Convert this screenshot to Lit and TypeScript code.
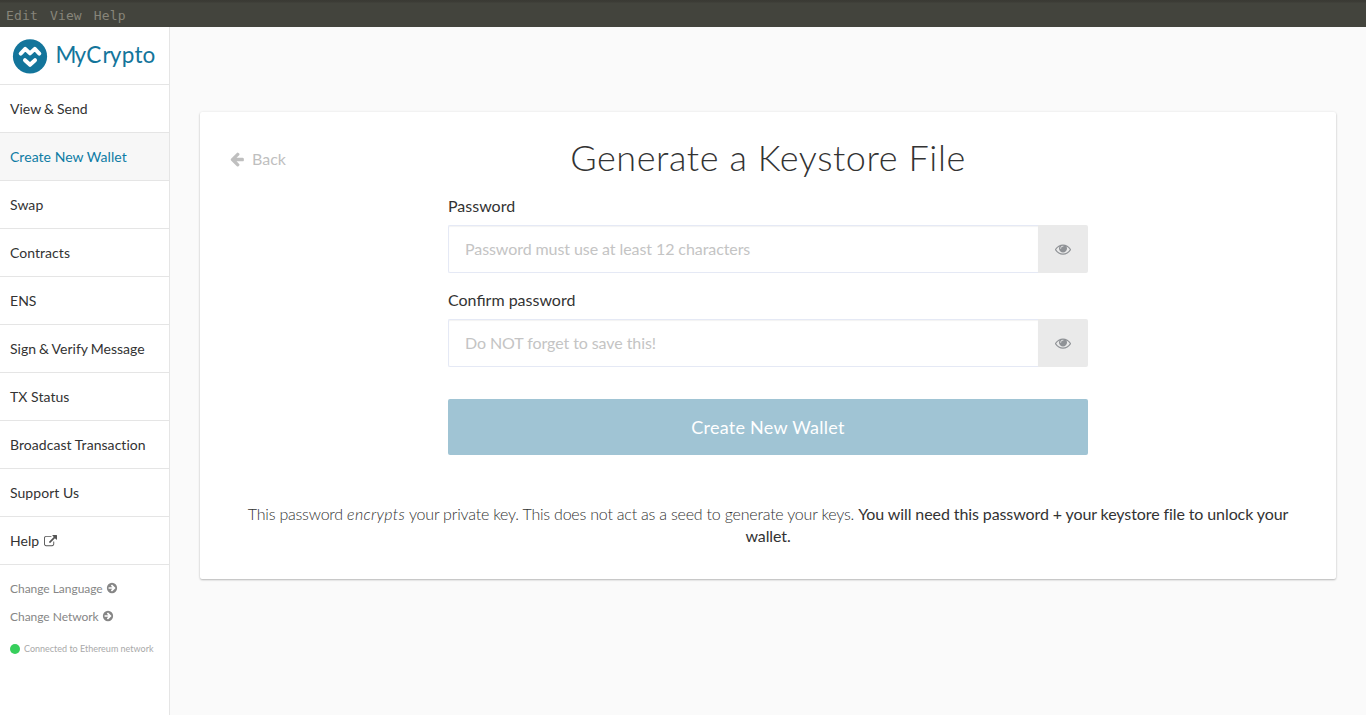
import { LitElement, html, css } from "lit";
import { customElement, property } from "lit/decorators.js";

const ICONS: Record<string, string> = {
  eye: "M1664 960q-152-236-381-353 61 104 61 225 0 185-131.5 316.5t-316.5 131.5-316.5-131.5-131.5-316.5q0-121 61-225-229 117-381 353 133 205 333.5 326.5t434.5 121.5 434.5-121.5 333.5-326.5zm-720-384q0-20-14-34t-34-14q-125 0-214.5 89.5t-89.5 214.5q0 20 14 34t34 14 34-14 14-34q0-86 61-147t147-61q20 0 34-14t14-34zm848 384q0 34-20 69-140 230-376.5 368.5t-499.5 138.5-499.5-139-376.5-368q-20-35-20-69t20-69q140-229 376.5-368t499.5-139 499.5 139 376.5 368q20 35 20 69z",
  external: "M1408 928v320q0 119-84.5 203.5t-203.5 84.5h-832q-119 0-203.5-84.5t-84.5-203.5v-832q0-119 84.5-203.5t203.5-84.5h704q14 0 23 9t9 23v64q0 14-9 23t-23 9h-704q-66 0-113 47t-47 113v832q0 66 47 113t113 47h832q66 0 113-47t47-113v-320q0-14 9-23t23-9h64q14 0 23 9t9 23zm384-864v512q0 26-19 45t-45 19-45-19l-176-176-652 652q-10 10-23 10t-23-10l-114-114q-10-10-10-23t10-23l652-652-176-176q-19-19-19-45t19-45 45-19h512q26 0 45 19t19 45z",
  back: "M1664 896v128q0 53-32.5 90.5t-84.5 37.5h-704l293 294q38 36 38 90t-38 90l-75 76q-37 37-90 37-52 0-91-37l-651-652q-37-37-37-90 0-52 37-91l651-650q38-38 91-38 52 0 90 38l75 74q38 38 38 91t-38 91l-293 293h704q52 0 84.5 37.5t32.5 90.5z",
  go: "M896 128a768 768 0 1 0 0 1536a768 768 0 1 0 0 -1536z M1413 896q0-27-18-45l-453-453q-18-18-45-18t-45 18l-91 91q-18 18-18 45t18 45l189 189h-502q-26 0-45 19t-19 45v128q0 26 19 45t45 19h502l-189 189q-18 18-18 45t18 45l91 91q18 18 45 18t45-18l453-453q18-18 18-45z",
};

@customElement("mc-icon")
class McIcon extends LitElement {
  @property() name = "";
  static styles = css`
    :host { display: inline-block; width: 1em; height: 1em; flex: none; }
    svg { display: block; width: 100%; height: 100%; fill: currentColor; fill-rule: evenodd; overflow: visible; }
  `;
  render() {
    return html`<svg viewBox="0 0 1792 1792"><path d=${ICONS[this.name]} /></svg>`;
  }
}

@customElement("mc-logo")
class McLogo extends LitElement {
  static styles = css`
    :host { display: block; width: 169px; height: 57px; }
    svg { display: block; }
    .word { font: 400 22.5px Lato, sans-serif; fill: #13759b; }
    .mark { fill: none; stroke: #fff; stroke-width: 4; stroke-linecap: round; stroke-linejoin: round; }
  `;
  render() {
    return html`<svg width="169" height="57" viewBox="0 0 169 57">
      <circle cx="30" cy="29.4" r="17.1" fill="#13759b" />
      <path class="mark" d="M20.7 26.6 L25.2 21.9 L30 26.4 L34.8 21.9 L39.3 26.6 M25 33.2 L30 37.8 L35 33.2" />
      <text class="word" x="55.6 74.6 86.3 102.6 109.8 121.8 134.4 142.4" y="36">MyCrypto</text>
    </svg>`;
  }
}

@customElement("mc-sidebar")
class McSidebar extends LitElement {
  static styles = css`
    :host { display: block; box-sizing: border-box; width: 170px; background: #fff; border-right: 1px solid #e5e5e5; flex: none; }
    .item { display: flex; align-items: center; box-sizing: border-box; height: 48px; padding: 0 10px; border-bottom: 1px solid #e5e5e5; font-size: 14px; letter-spacing: .05px; color: #333; white-space: nowrap; }
    .item.amp { letter-spacing: 0; word-spacing: -.5px; }
    .logo { border-bottom: 1px solid #e5e5e5; }
    .item.active { background: #f7f7f7; color: #0e7ca5; }
    .item mc-icon { margin: 2px 0 0 5px; font-size: 13px; color: #555; }
    .extras { padding: 9px 10px 0; }
    .extra { display: flex; align-items: center; height: 28px; font-size: 12px; color: #868686; }
    .extra mc-icon { margin-left: 3px; }
    .extra span { letter-spacing: -.03px; }
    .status { display: flex; align-items: center; gap: 4px; height: 36px; font-size: 9px; color: #a9a9a9; white-space: nowrap; }
    .dot { width: 10px; height: 10px; margin-top: 1px; border-radius: 50%; background: #37cf5c; flex: none; }
  `;
  render() {
    const items = ["View & Send", "Create New Wallet", "Swap", "Contracts", "ENS", "Sign & Verify Message", "TX Status", "Broadcast Transaction", "Support Us", "Help"];
    return html`
      <div class="logo"><mc-logo></mc-logo></div>
      ${items.map((t) => html`<div class="item ${t === "Create New Wallet" ? "active" : ""} ${t.includes("&") ? "amp" : ""}">${t}${t === "Help" ? html`<mc-icon name="external"></mc-icon>` : ""}</div>`)}
      <div class="extras">
        <div class="extra"><span>Change Language</span><mc-icon name="go"></mc-icon></div>
        <div class="extra"><span>Change Network</span><mc-icon name="go"></mc-icon></div>
        <div class="status"><span class="dot"></span>Connected to Ethereum network</div>
      </div>`;
  }
}

@customElement("mc-field")
class McField extends LitElement {
  @property() label = "";
  @property() placeholder = "";
  static styles = css`
    :host { display: block; }
    .label { font-size: 16px; line-height: 22px; margin-bottom: 8px; color: #333; }
    .row { display: flex; height: 48px; }
    input { flex: 1; min-width: 0; box-sizing: border-box; margin: 0; padding: 0 16px 2px; border: 1px solid #e5e9f5; border-right: 0; border-radius: 2px 0 0 2px; font: 400 16px Lato, sans-serif; letter-spacing: -.08px; background: #fff; box-shadow: inset 0 1px 1px rgba(0,0,0,.05); outline: none; }
    input::placeholder { color: #c4c4c4; opacity: 1; }
    .eye { width: 50px; display: flex; align-items: center; justify-content: center; background: #eaeaea; border-radius: 0 2px 2px 0; color: #8f9296; font-size: 16px; }
  `;
  render() {
    return html`<div class="label">${this.label}</div>
      <div class="row"><input placeholder=${this.placeholder} /><span class="eye"><mc-icon name="eye"></mc-icon></span></div>`;
  }
}

@customElement("app-root")
class AppRoot extends LitElement {
  static styles = css`
    :host { display: flex; flex-direction: column; height: 715px; font-family: Lato, sans-serif; color: #333; background: #fafafa; overflow: hidden; }
    .menubar { flex: none; box-sizing: border-box; height: 27px; padding: 6px 6px 0; display: flex; gap: 12px; font: 13px/20px "DejaVu Sans Mono", monospace; letter-spacing: .15px; color: #87857a; background: linear-gradient(#3a3a34 0, #3c3c36 2px, #43443d 3px, #43443d 100%); }
    .body { flex: 1; display: flex; min-height: 0; }
    main { flex: 1; padding: 85px 30px 0; }
    .card { box-sizing: border-box; height: 467px; background: #fff; border-radius: 2px; box-shadow: 0 1px 2px rgba(0,0,0,.25), 0 0 3px rgba(0,0,0,.06); padding: 22px 30px 0; }
    .head { display: grid; grid-template-columns: 1fr auto 1fr; align-items: center; height: 46px; }
    .back { display: flex; align-items: center; gap: 7px; margin: 4px 0 0 -1px; font-size: 16px; line-height: 20px; color: #bfbfbf; }
    h1 { margin: 0; font-size: 36px; font-weight: 300; line-height: 46px; letter-spacing: .58px; color: #333; }
    .form { width: 640px; margin: 15px auto 0; display: flex; flex-direction: column; gap: 16px; }
    .submit { margin: 16px 0 0; height: 56px; padding: 0; border: 0; border-radius: 2px; background: #a0c4d4; color: #fff; font: 400 18px Lato, sans-serif; letter-spacing: .27px; }
    .note { margin: 48px 0 0; padding: 0 10px; text-align: center; font-size: 16px; line-height: 22px; font-weight: 300; letter-spacing: -.21px; color: #333; }
    .note em { letter-spacing: .3px; }
    .note strong { font-weight: 400; letter-spacing: -.1px; }
  `;
  render() {
    return html`
      <div class="menubar"><span>Edit</span><span>View</span><span>Help</span></div>
      <div class="body">
        <mc-sidebar></mc-sidebar>
        <main>
          <section class="card">
            <div class="head">
              <span class="back"><mc-icon name="back"></mc-icon>Back</span>
              <h1>Generate a Keystore File</h1>
            </div>
            <div class="form">
              <mc-field label="Password" placeholder="Password must use at least 12 characters"></mc-field>
              <mc-field label="Confirm password" placeholder="Do NOT forget to save this!"></mc-field>
              <button class="submit">Create New Wallet</button>
            </div>
            <p class="note">This password <em>encrypts</em> your private key. This does not act as a seed to generate your keys. <strong>You will need this password + your keystore file to unlock your wallet.</strong></p>
          </section>
        </main>
      </div>`;
  }
}
